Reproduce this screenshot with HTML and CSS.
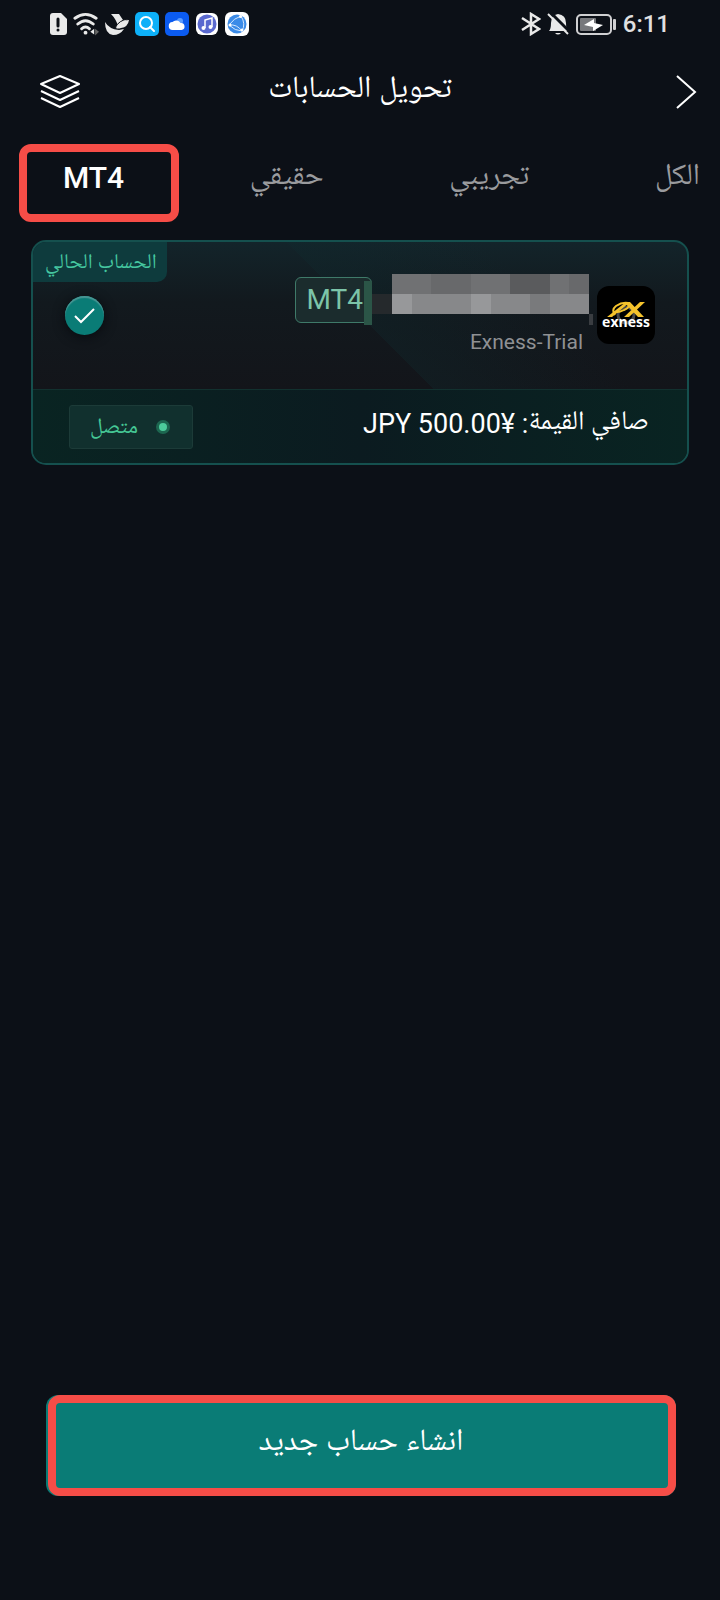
FILE: index.html
```
<!DOCTYPE html>
<html lang="ar" dir="rtl">
  <head>
    <meta charset="UTF-8"/>
    <meta name="viewport" content="width=device-width, initial-scale=1.0">
    <link rel="stylesheet" href="styles.css">
    <title>تحويل الحسابات</title>
  </head>
  <body>
    <!-- phone status bar -->
    <div class="statusBar" dir="ltr">
      <div class="statusBar_group">
        <svg width="18" height="24" viewBox="0 0 18 24">
          <path fill="#e9e9e9" d="M4 1h8l6 6v13q0 3-3 3H4q-3 0-3-3V4q0-3 3-3z"/>
          <path stroke="#0c1017" stroke-width="3" stroke-linecap="round" d="M9 7v7M9 18v0"/>
        </svg>
        <svg width="26" height="24" viewBox="0 0 27 24" fill="none" stroke="#e9e9e9" stroke-width="3" stroke-linecap="round">
          <path d="M2 6q11-8 22 0M5 12q8-7 16 0M9 17q4-4 8 0"/>
          <circle cx="13" cy="21" r="2" fill="#e9e9e9" stroke="none"/>
          <path fill="#e9e9e9" stroke="none" d="M18 20l4-3v6z"/>
          <path fill="#666" stroke="none" d="M23 17l4 3-4 4z"/>
        </svg>
        <svg width="24" height="24" viewBox="0 0 24 24" fill="#e9e9e9">
          <path d="M6 2h8l4 6-5 6q-2-7-7-12z"/>
          <path d="M11 16q4-8 13-8-1 7-8 8-3 1-5 0z"/>
          <path d="M0 10q4 7 14 8l5-1q-4 6-11 6Q0 22 0 10z"/>
          <path stroke="#0c1017" d="M10 16q4-8 13-9"/>
        </svg>
        <svg width="24" height="24" viewBox="0 0 24 24">
          <rect width="24" height="24" rx="5" fill="#0db0f8"/>
          <circle cx="11" cy="11" r="6" fill="none" stroke="#fff" stroke-width="2"/>
          <path stroke="#fff" stroke-width="2" stroke-linecap="round" d="M15 15l4 4"/>
        </svg>
        <svg width="24" height="24" viewBox="0 0 24 24">
          <rect width="24" height="24" rx="5" fill="#0b5bf0"/>
          <circle cx="15" cy="9" r="3" fill="#5a9cff"/>
          <path fill="#fff" d="M8 18a4 4 0 0 1-.5-8 5 5 0 0 1 8 1 3.500 3.500 0 0 1 1 7z"/>
        </svg>
        <svg width="24" height="24" viewBox="0 0 24 24">
          <rect x="1" y="1" width="22" height="22" rx="6" fill="#fff"/>
          <circle cx="12" cy="12" r="9.500" fill="#5a69cf"/>
          <path fill="none" stroke="#fff" stroke-width="1.500" d="M10 16V8l7-2v9"/>
          <circle cx="8.500" cy="16" r="2" fill="#fff"/>
          <circle cx="15.500" cy="15" r="2" fill="#fff"/>
        </svg>
        <svg width="24" height="24" viewBox="0 0 24 24">
          <rect width="24" height="24" rx="6" fill="#fff"/>
          <circle cx="12" cy="12" r="9.500" fill="#3b8be8"/>
          <path fill="none" stroke="#d5e8ff" d="M16 4Q9 6 4 13q6 6 13 6M16 4q5 8 1 15M4 13q8-1 13 6"/>
          <circle cx="15.500" cy="4.500" r="1.500" fill="#fff"/>
          <circle cx="5" cy="13" r="1.500" fill="#fff"/>
          <circle cx="17" cy="18" r="1.500" fill="#fff"/>
        </svg>
      </div>
      <div class="statusBar_group">
        <svg width="20" height="24" viewBox="0 0 20 24" fill="none" stroke="#e9e9e9" stroke-width="2.500">
          <path d="M1 6l17 11-8 5V2l8 5L1 18"/>
        </svg>
        <svg width="22" height="24" viewBox="0 0 22 24">
          <path fill="#e9e9e9" d="M2 19q2-2 2-8 0-8 7-9 8 1 8 9 0 6 2 8zM8 21h6q-3 3-6 0z"/>
          <path stroke="#0c1017" stroke-width="3" d="M4 1l18 18"/>
          <path stroke="#e9e9e9" stroke-width="2" d="M1 2l20 20"/>
        </svg>
        <svg width="42" height="24" viewBox="0 0 42 24">
          <rect x="2" y="3" width="34" height="19" rx="4" fill="none" stroke="#d0d0d2" stroke-width="2"/>
          <rect x="5" y="6" width="16" height="13" rx="1" fill="#77787c"/>
          <path fill="#fff" d="M9 13l10-6v4l9 2-10 6v-4z"/>
          <rect x="38" y="7" width="3" height="11" rx="1" fill="#d0d0d2"/>
        </svg>
        <span class="statusBar_time">6:11</span>
      </div>
    </div>

    <header class="header">
      <button class="header_button" aria-label="رجوع">
        <svg width="24" height="34" viewBox="0 0 24 34" fill="none" stroke="#fff" stroke-width="2">
          <path d="M3 1l18 16L3 33"/>
        </svg>
      </button>
      <h1 class="header_title">تحويل الحسابات</h1>
      <button class="header_button header_button-end" aria-label="الحسابات">
        <svg width="40" height="34" viewBox="0 0 40 34" fill="none" stroke="#fff" stroke-width="2" stroke-linejoin="round">
          <path d="M20 1l19 8-19 9L1 9zM1 16l19 9 19-9M1 23l19 9 19-9"/>
        </svg>
      </button>
    </header>

    <nav class="tabs">
      <button class="tabs_item">الكل</button>
      <button class="tabs_item">تجريبي</button>
      <button class="tabs_item">حقيقي</button>
      <button class="tabs_item tabs_item-active">MT4</button>
    </nav>

    <main class="accounts">
      <article class="account">
        <span class="account_current">الحساب الحالي</span>
        <div class="account_top">
          <svg class="account_logo" width="58" height="58" viewBox="0 0 58 58" role="img" aria-label="exness">
            <rect width="58" height="58" rx="12" fill="#000"/>
            <circle cx="29" cy="29" r="8" fill="none" stroke="#4a4a4a" stroke-width="3"/>
            <path fill="none" stroke="#f5c32c" stroke-width="2" d="M18 29q-4-5 1-9 6-4 12-3 3 4-4 7-5 3-11 2"/>
            <path fill="#f5c32c" d="M10 31l19-15h4L15 31zM27 16h6l14 15h-6zM43 16h5L32 31h-5z"/>
            <text x="29" y="41" text-anchor="middle" class="account_logoText">exness</text>
          </svg>
          <div class="account_info">
            <div class="account_row">
              <div class="mosaic" aria-hidden="true">
                <i class="c3"></i><i class="c3"></i><i class="c2"></i><i class="c2"></i><i class="c3"></i><i class="c3"></i><i class="c1"></i><i class="c1"></i><i class="c3"></i><i class="c2"></i>
                <i class="c6"></i><i class="c5"></i><i class="c5"></i><i class="c5"></i><i class="c6"></i><i class="c5"></i><i class="c5"></i><i class="c4"></i><i class="c5"></i><i class="c5"></i>
              </div>
              <span class="account_type">MT4</span>
            </div>
            <p class="account_server">Exness-Trial</p>
          </div>
          <span class="account_check">
            <svg width="22" height="16" viewBox="0 0 22 16" fill="none" stroke="#fff" stroke-width="2">
              <path d="M1 8l6 6L20 1"/>
            </svg>
          </span>
        </div>
        <div class="account_bottom">
          <p class="account_equity">صافي القيمة: <bdi dir="ltr">JPY 500.00¥</bdi></p>
          <span class="account_status">متصل</span>
        </div>
      </article>
    </main>

    <footer class="footer">
      <button class="footer_create">انشاء حساب جديد</button>
    </footer>
  </body>
</html>
```
FILE: styles.css
```
* {
  box-sizing: border-box;
}
body {
  margin: 0;
  min-height: 100vh;
  display: flex;
  flex-direction: column;
  background-color: #0c1017;
  color: #fff;
  font-family: Roboto, "Noto Naskh Arabic UI", "Noto Naskh Arabic", "Noto Sans Arabic", "Noto Sans", "DejaVu Sans", sans-serif;
}
h1, p {
  margin: 0;
  font-weight: normal;
}
button {
  padding: 0;
  border: none;
  background: none;
  color: inherit;
  font-family: inherit;
  cursor: pointer;
}
svg {
  display: block;
}

.statusBar {
  display: flex;
  justify-content: space-between;
  align-items: center;
  height: 48px;
  padding: 0 50px 0 49px;
}
  .statusBar_group {
    display: flex;
    align-items: center;
    gap: 6px;
  }
  .statusBar_time {
    font-size: 24px;
    font-weight: 500;
    color: #e0e0e1;
  }

.header {
  display: flex;
  justify-content: space-between;
  align-items: center;
  height: 88px;
  padding: 0 22px;
}
  .header_button {
    width: 58px;
  }
  .header_button-end {
    display: flex;
    justify-content: flex-start;
  }
  .header_title {
    padding-bottom: 2px;
    font-size: 31px;
    line-height: 40px;
  }

.tabs {
  display: flex;
  justify-content: space-between;
  align-items: center;
  height: 84px;
  padding: 0 20px 0 63px;
}
  .tabs_item {
    position: relative;
    font-size: 30px;
    line-height: 40px;
    color: #9a9b9e;
  }
  .tabs_item-active {
    font-weight: 500;
    color: #fff;
  }
  /* highlight frame round the selected tab */
  .tabs_item-active::after {
    content: "";
    position: absolute;
    inset: -14px -55px -24px -44px;
    border: 8px solid #f64d47;
    border-radius: 12px;
  }

.accounts {
  flex: 1;
  padding: 20px 31px;
}
.account {
  position: relative;
  overflow: hidden;
  border: 2px solid #15504e;
  border-radius: 15px;
  background: linear-gradient(#13242a, #12191e 60px, #13151a 148px);
}
  .account_current {
    position: absolute;
    top: 0;
    left: 0;
    padding: 4px 10px 0 12px;
    border-bottom-right-radius: 10px;
    background-color: #0e3b3d;
    color: #45c7a0;
    font-size: 21px;
    line-height: 36px;
  }
  .account_top {
    display: flex;
    align-items: flex-start;
    height: 147px;
    padding: 32px 32px 0;
    background: linear-gradient(45deg, transparent 50%, #0f2a2e55 50%, transparent 75%);
  }
  .account_logo {
    margin-top: 12px;
  }
  .account_logoText {
    fill: #fff;
    font: 700 14px "Open Sans", sans-serif;
  }
  .account_info {
    margin-right: 8px;
  }
  .account_row {
    display: flex;
    align-items: flex-start;
    gap: 20px;
  }
  .account_type {
    position: relative;
    margin-top: 3px;
    padding: 0 8px 0 11px;
    border: 1px solid #3f7a69;
    border-radius: 6px;
    background-color: #1b2c2d;
    color: #7cc4a8;
    font-size: 28px;
    line-height: 44px;
    direction: ltr;
  }
  .account_type::after {
    content: "";
    position: absolute;
    inset: 3px -1px -3px auto;
    width: 8px;
    background-color: #2b5547;
  }
  .account_server {
    margin-right: 6px;
    color: #8f9194;
    font-size: 21px;
    line-height: 38px;
  }
  .account_check {
    display: flex;
    justify-content: center;
    align-items: center;
    width: 39px;
    height: 39px;
    margin: 22px auto 0 0;
    border-radius: 50%;
    background-color: #0a7c76;
    box-shadow: 0 2px 12px #080b0f, inset 0 2px 1px #4a9694;
  }
  .account_bottom {
    display: flex;
    justify-content: space-between;
    align-items: center;
    height: 74px;
    padding: 0 38px 0 36px;
    border-top: 1px solid #12312f;
    background: linear-gradient(90deg, #092422, #0b1b20 50%, #092422);
  }
  .account_equity {
    padding-bottom: 6px;
    font-size: 27px;
    line-height: 40px;
  }
  .account_status {
    display: flex;
    align-items: center;
    gap: 18px;
    height: 44px;
    padding: 4px 22px 0 20px;
    border: 1px solid #1c3b38;
    border-radius: 3px;
    background-color: #11302e;
    color: #45c795;
    font-size: 22px;
    line-height: 38px;
  }
  .account_status::before {
    content: "";
    width: 14px;
    height: 14px;
    margin-bottom: 4px;
    box-sizing: border-box;
    border: 3px solid #1d6650;
    border-radius: 50%;
    background-color: #4ccb9b;
  }

/* censored account number */
.mosaic {
  position: relative;
  display: grid;
  grid-template-columns: repeat(10, 1fr);
  width: 197px;
  direction: ltr;
}
  .mosaic::before {
    content: "";
    position: absolute;
    left: -20px;
    bottom: 0;
    width: 20px;
    height: 20px;
    background-color: #25292c;
  }
  .mosaic::after {
    content: "";
    position: absolute;
    right: -4px;
    bottom: -11px;
    width: 4px;
    height: 11px;
    background-color: #3a3d41;
  }
  .mosaic i { height: 20px; }
  .c1 { background-color: #5a5b5d; }
  .c2 { background-color: #68696b; }
  .c3 { background-color: #707173; }
  .c4 { background-color: #797a7c; }
  .c5 { background-color: #87888a; }
  .c6 { background-color: #97989a; }

.footer {
  padding: 0 44px 104px 46px;
}
  .footer_create {
    position: relative;
    width: 100%;
    height: 101px;
    padding-bottom: 8px;
    border-radius: 12px;
    background-color: #0a7c76;
    font-size: 31px;
  }
  .footer_create::after {
    content: "";
    position: absolute;
    inset: 0 0 0 2px;
    border: 8px solid #f64d47;
    border-radius: 12px;
  }
```
